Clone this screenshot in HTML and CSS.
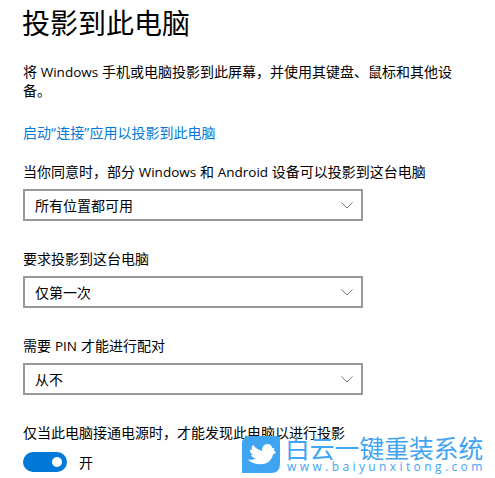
FILE: index.html
```html
<!DOCTYPE html>
<html lang="zh-CN">
<head>
<meta charset="utf-8">
<title>投影到此电脑</title>
<link rel="stylesheet" href="styles.css">
</head>
<body>
<main class="page">
  <h1 class="title">投影到此电脑</h1>
  <p class="intro">将 <span class="latin">Windows</span> 手机或电脑投影到此屏幕，并使用其键盘、鼠标和其他设<br>备。</p>
  <a class="link">启动<span class="quote">“</span>连接<span class="quote">”</span>应用以投影到此电脑</a>
  <section class="field">
    <div class="label">当你同意时，部分 <span class="latin">Windows</span> 和 <span class="latin">Android</span> 设备可以投影到这台电脑</div>
    <div class="select"><span>所有位置都可用</span><svg class="chevron" viewBox="0 0 12 7"><path d="M.4.5 6 6 11.6.5"/></svg></div>
  </section>
  <section class="field">
    <div class="label">要求投影到这台电脑</div>
    <div class="select"><span>仅第一次</span><svg class="chevron" viewBox="0 0 12 7"><path d="M.4.5 6 6 11.6.5"/></svg></div>
  </section>
  <section class="field">
    <div class="label pin">需要 <span class="latin">PIN</span> 才能进行配对</div>
    <div class="select"><span>从不</span><svg class="chevron" viewBox="0 0 12 7"><path d="M.4.5 6 6 11.6.5"/></svg></div>
  </section>
  <section class="field last">
    <div class="label">仅当此电脑接通电源时，才能发现此电脑以进行投影</div>
    <div class="power"><span class="toggle"><span class="knob"></span></span><span>开</span></div>
  </section>
</main>
<aside class="watermark">
  <svg class="logo" viewBox="0 0 38 37"><path class="tile" d="M8 0H35Q38 0 38 3V28Q38 37 29 37H0V8Q0 0 8 0Z"/><path class="bird" d="M11 9C13.5 12 16.5 14 20 15C20 11 22 8 25.5 8C28 8 29.5 9.5 30.5 12L32.8 12.8L31.8 14.3L34 16.8L31 18.5C29.5 24.5 25.5 28.2 19 28.3C13 28.3 8.5 26.5 5.8 23.5C8.5 24 11.5 23.8 13.5 22.5C11 21.8 9.5 20.5 9 19L11 18.7C8.5 17.3 7.5 15.5 8 13.5L10 14.2C9.3 12.3 9.8 10.3 11 9Z"/></svg>
  <div class="brand"><div class="name">白云一键重装系统</div><div class="url">www.baiyunxitong.com</div></div>
</aside>
</body>
</html>
```
FILE: styles.css
```css
* { box-sizing: border-box; }
body {
  margin: 0;
  background: #fff;
  color: #000;
  font: 14px/18px "Noto Sans CJK SC", sans-serif;
  white-space: nowrap;
  overflow: hidden;
}
.page { height: 478px; padding: 2px 0 0 23px; }
.title { margin: 0 0 21px -1px; font-size: 28px; line-height: 40px; font-weight: 400; }
.intro { margin: 0 0 24px; line-height: 17.5px; word-spacing: .6px; }
.latin { font-family: "Open Sans", sans-serif; font-size: 13.5px; }
.quote { font-family: "Open Sans", sans-serif; letter-spacing: .4px; }
.link { display: block; margin-bottom: 20px; color: #0078d7; }
.field { height: 87px; }
.field.last { height: 50px; }
.label { height: 27px; word-spacing: .6px; }
.pin { word-spacing: .8px; }
.select {
  display: flex;
  align-items: center;
  justify-content: space-between;
  width: 340px;
  height: 32px;
  padding: 0 8px 0 10px;
  border: 2px solid #999;
}
.select span { margin-top: -1px; }
.chevron { width: 12px; height: 7px; fill: none; stroke: #777; stroke-width: 1; }
.power { display: flex; align-items: center; gap: 12px; height: 24px; }
.toggle {
  display: flex;
  align-items: center;
  justify-content: flex-end;
  width: 44px;
  height: 20px;
  padding-right: 5px;
  border-radius: 10px;
  background: #0078d7;
}
.knob { width: 10px; height: 10px; border-radius: 50%; background: #fff; }
.watermark { position: absolute; left: 242px; top: 436px; display: flex; gap: 6px; color: #3fa4f2; }
.logo { width: 38px; height: 37px; }
.tile { fill: #3fa4f2; }
.bird { fill: #fff; }
.brand { width: 200px; }
.name { height: 24px; margin-left: -1px; font-size: 24.8px; line-height: 22px; }
.url { padding-left: 1px; font-family: "Open Sans", sans-serif; font-size: 12px; line-height: 14px; letter-spacing: 3.4px; }
```
